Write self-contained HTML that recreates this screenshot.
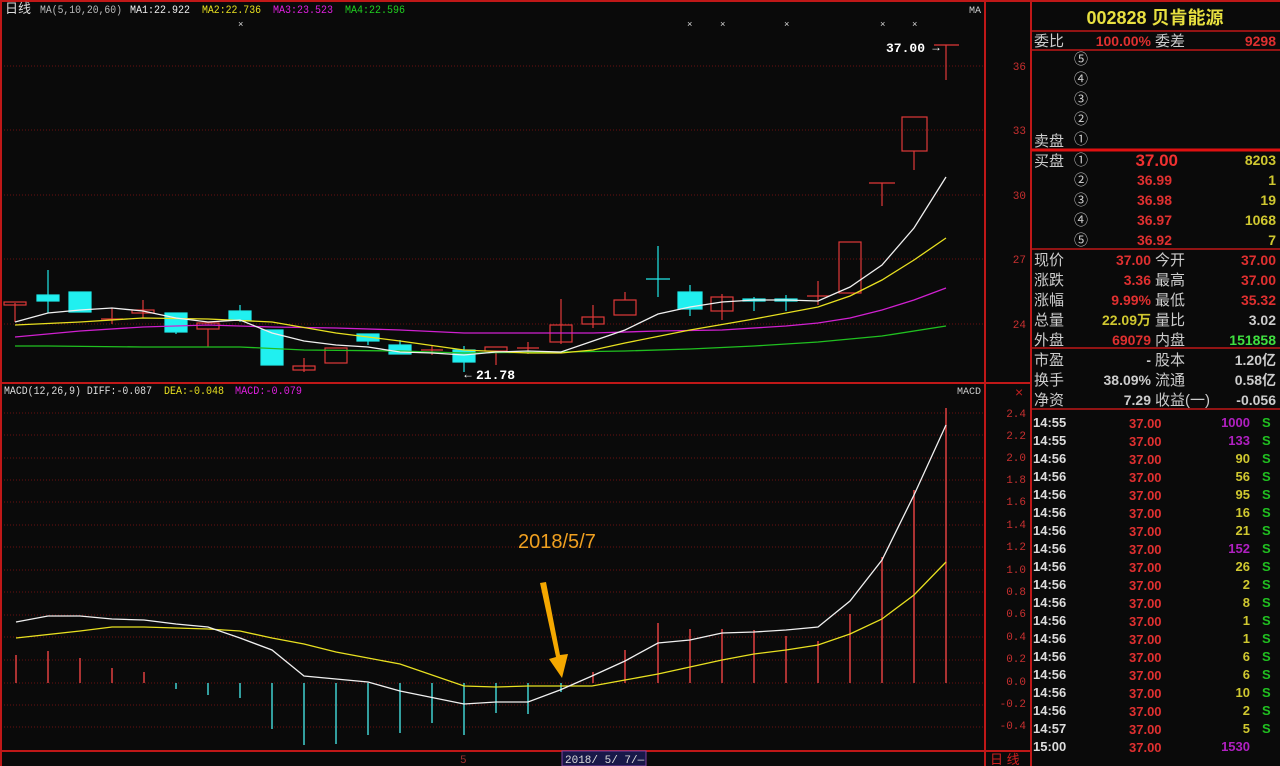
<!DOCTYPE html>
<html><head><meta charset="utf-8"><style>
html,body{margin:0;padding:0;background:#0a0a0a;width:1280px;height:766px;overflow:hidden}
svg{display:block}
.m{font-family:"Liberation Mono",monospace}
.s{font-family:"Liberation Sans","Noto Sans CJK SC",sans-serif}
</style></head><body>
<svg width="1280" height="766" viewBox="0 0 1280 766" xmlns="http://www.w3.org/2000/svg">
<rect width="1280" height="766" fill="#0a0a0a"/>
<g stroke="#c01818" stroke-width="2" fill="none">
<line x1="0" y1="1" x2="1280" y2="1"/>
<line x1="1" y1="0" x2="1" y2="766"/>
<line x1="985" y1="0" x2="985" y2="766"/>
<line x1="1031" y1="0" x2="1031" y2="766"/>
<line x1="0" y1="383" x2="1031" y2="383"/>
<line x1="0" y1="751" x2="1031" y2="751"/>
</g>
<g stroke="#6a1010" stroke-width="1" stroke-dasharray="1,2">
<line x1="4" y1="66" x2="984" y2="66"/><line x1="4" y1="130" x2="984" y2="130"/><line x1="4" y1="195" x2="984" y2="195"/><line x1="4" y1="259" x2="984" y2="259"/><line x1="4" y1="324" x2="984" y2="324"/>
<line x1="4" y1="413" x2="984" y2="413"/><line x1="4" y1="435" x2="984" y2="435"/><line x1="4" y1="458" x2="984" y2="458"/><line x1="4" y1="480" x2="984" y2="480"/><line x1="4" y1="502" x2="984" y2="502"/><line x1="4" y1="525" x2="984" y2="525"/><line x1="4" y1="547" x2="984" y2="547"/><line x1="4" y1="570" x2="984" y2="570"/><line x1="4" y1="592" x2="984" y2="592"/><line x1="4" y1="615" x2="984" y2="615"/><line x1="4" y1="637" x2="984" y2="637"/><line x1="4" y1="660" x2="984" y2="660"/><line x1="4" y1="683" x2="984" y2="683"/><line x1="4" y1="705" x2="984" y2="705"/><line x1="4" y1="727" x2="984" y2="727"/>
</g>
<g class="m" font-size="11">
<text x="5" y="13" fill="#ddd" class="s" font-size="13">日线</text>
<text x="40" y="13" fill="#bbb" textLength="82" lengthAdjust="spacingAndGlyphs">MA(5,10,20,60)</text>
<text x="130" y="13" fill="#eee" textLength="60" lengthAdjust="spacingAndGlyphs">MA1:22.922</text>
<text x="202" y="13" fill="#e8e020" textLength="59" lengthAdjust="spacingAndGlyphs">MA2:22.736</text>
<text x="273" y="13" fill="#e020e0" textLength="60" lengthAdjust="spacingAndGlyphs">MA3:23.523</text>
<text x="345" y="13" fill="#20d020" textLength="60" lengthAdjust="spacingAndGlyphs">MA4:22.596</text>
<text x="969" y="13" fill="#ccc" font-size="10">MA</text>
<text x="4" y="394" fill="#ddd" textLength="148" lengthAdjust="spacingAndGlyphs">MACD(12,26,9) DIFF:-0.087</text>
<text x="164" y="394" fill="#e8e020" textLength="60" lengthAdjust="spacingAndGlyphs">DEA:-0.048</text>
<text x="235" y="394" fill="#e020e0" textLength="67" lengthAdjust="spacingAndGlyphs">MACD:-0.079</text>
<text x="957" y="394" fill="#ccc" font-size="10">MACD</text>
</g>
<g fill="#ddd" font-size="9" class="m"><text x="238" y="27">×</text><text x="687" y="27">×</text><text x="720" y="27">×</text><text x="784" y="27">×</text><text x="880" y="27">×</text><text x="912" y="27">×</text></g>
<g fill="#c83030" font-size="11" class="m" text-anchor="end">
<text x="1026" y="70">36</text><text x="1026" y="134">33</text><text x="1026" y="199">30</text><text x="1026" y="263">27</text><text x="1026" y="328">24</text>
<text x="1026" y="417">2.4</text><text x="1026" y="439">2.2</text><text x="1026" y="461">2.0</text><text x="1026" y="483">1.8</text><text x="1026" y="505">1.6</text><text x="1026" y="528">1.4</text><text x="1026" y="550">1.2</text><text x="1026" y="573">1.0</text><text x="1026" y="595">0.8</text><text x="1026" y="617">0.6</text><text x="1026" y="640">0.4</text><text x="1026" y="662">0.2</text><text x="1026" y="685">0.0</text><text x="1026" y="707">-0.2</text><text x="1026" y="729">-0.4</text>
</g>
<text x="1015" y="397" fill="#c02020" font-size="14" class="s">×</text>
<g stroke-width="1.2" fill="none">
<g stroke="#e03838">
<line x1="15" y1="303" x2="15" y2="322"/><rect x="4" y="302" width="22" height="3"/>
<line x1="112" y1="308" x2="112" y2="324"/><line x1="101" y1="319" x2="123" y2="319"/>
<line x1="143" y1="300" x2="143" y2="318"/><rect x="132" y="310" width="22" height="3"/>
<line x1="208" y1="329" x2="208" y2="347"/><rect x="197" y="323" width="22" height="6"/>
<line x1="304" y1="358" x2="304" y2="372"/><rect x="293" y="366" width="22" height="4"/>
<rect x="325" y="348" width="22" height="15"/>
<line x1="432" y1="345" x2="432" y2="355"/><line x1="421" y1="350" x2="443" y2="350"/>
<line x1="496" y1="351" x2="496" y2="365"/><rect x="485" y="347" width="22" height="4"/>
<line x1="528" y1="342" x2="528" y2="354"/><line x1="517" y1="348" x2="539" y2="348"/>
<line x1="561" y1="299" x2="561" y2="344"/><rect x="550" y="325" width="22" height="17"/>
<line x1="593" y1="305" x2="593" y2="328"/><rect x="582" y="317" width="22" height="7"/>
<line x1="625" y1="292" x2="625" y2="300"/><rect x="614" y="300" width="22" height="15"/>
<line x1="722" y1="294" x2="722" y2="320"/><rect x="711" y="297" width="22" height="14"/>
<line x1="818" y1="281" x2="818" y2="305"/><line x1="807" y1="296" x2="829" y2="296"/>
<rect x="839" y="242" width="22" height="51"/>
<line x1="882" y1="183" x2="882" y2="206"/><line x1="869" y1="183" x2="895" y2="183"/>
<line x1="914" y1="151" x2="914" y2="170"/><rect x="902" y="117" width="25" height="34"/>
<line x1="946" y1="45" x2="946" y2="80"/><line x1="934" y1="45" x2="959" y2="45"/>
</g>
<g stroke="#20e8e8" fill="#20f0f0">
<line x1="48" y1="270" x2="48" y2="313"/><rect x="37" y="295" width="22" height="6"/>
<rect x="69" y="292" width="22" height="20"/>
<line x1="176" y1="313" x2="176" y2="334"/><rect x="165" y="313" width="22" height="19"/>
<line x1="240" y1="305" x2="240" y2="322"/><rect x="229" y="311" width="22" height="9"/>
<rect x="261" y="330" width="22" height="35"/>
<line x1="368" y1="334" x2="368" y2="345"/><rect x="357" y="334" width="22" height="7"/>
<line x1="400" y1="340" x2="400" y2="354"/><rect x="389" y="345" width="22" height="9"/>
<line x1="464" y1="346" x2="464" y2="372"/><rect x="453" y="350" width="22" height="12"/>
<line x1="658" y1="246" x2="658" y2="297"/><line x1="646" y1="279" x2="670" y2="279"/>
<line x1="690" y1="285" x2="690" y2="316"/><rect x="678" y="292" width="24" height="17"/>
<line x1="754" y1="297" x2="754" y2="311"/><rect x="743" y="299" width="22" height="2"/>
<line x1="786" y1="295" x2="786" y2="311"/><rect x="775" y="299" width="22" height="2"/>
</g>
</g>
<g fill="none" stroke-width="1.3">
<polyline stroke="#20c020" points="15,346 48,346 143,347 240,347 304,350 400,351 464,353 561,352 625,351 690,349 754,346 818,342 882,336 946,326"/>
<polyline stroke="#d020d0" points="15,337 80,331 143,327 208,325 272,327 336,328 400,330 464,333 528,333 593,333 658,331 722,330 786,326 818,323 850,318 882,310 914,300 946,288"/>
<polyline stroke="#e8e020" points="15,325 80,322 143,318 208,319 272,322 336,333 400,341 464,350 528,353 561,353 593,350 625,343 690,330 754,319 818,307 850,296 882,280 914,260 946,238"/>
<polyline stroke="#f0f0f0" points="15,322 48,313 80,310 112,308 143,311 176,318 208,322 240,320 272,333 304,341 336,345 368,347 400,352 432,353 464,355 496,352 528,351 561,352 593,341 625,330 658,314 690,307 722,302 754,300 786,300 818,301 850,287 882,265 914,228 946,177"/>
</g>
<text x="886" y="52" fill="#fff" font-weight="bold" font-size="13" class="m">37.00</text>
<text x="930" y="51" fill="#fff" font-size="12" class="s">→</text>
<text x="462" y="378" fill="#fff" font-size="12" class="s">←</text>
<text x="476" y="379" fill="#fff" font-weight="bold" font-size="13" class="m">21.78</text>
<g stroke-width="1.5">
<g stroke="#e04040">
<line x1="16" y1="655" x2="16" y2="683"/><line x1="48" y1="651" x2="48" y2="683"/><line x1="80" y1="658" x2="80" y2="683"/><line x1="112" y1="668" x2="112" y2="683"/><line x1="144" y1="672" x2="144" y2="683"/>
<line x1="593" y1="672" x2="593" y2="683"/><line x1="625" y1="650" x2="625" y2="683"/><line x1="658" y1="623" x2="658" y2="683"/><line x1="690" y1="629" x2="690" y2="683"/><line x1="722" y1="629" x2="722" y2="683"/><line x1="754" y1="630" x2="754" y2="683"/><line x1="786" y1="636" x2="786" y2="683"/><line x1="818" y1="641" x2="818" y2="683"/><line x1="850" y1="614" x2="850" y2="683"/><line x1="882" y1="557" x2="882" y2="683"/><line x1="914" y1="490" x2="914" y2="683"/><line x1="946" y1="408" x2="946" y2="683"/>
</g>
<g stroke="#40d0d0">
<line x1="176" y1="683" x2="176" y2="689"/><line x1="208" y1="683" x2="208" y2="695"/><line x1="240" y1="683" x2="240" y2="698"/><line x1="272" y1="683" x2="272" y2="729"/><line x1="304" y1="683" x2="304" y2="745"/><line x1="336" y1="683" x2="336" y2="744"/><line x1="368" y1="683" x2="368" y2="735"/><line x1="400" y1="683" x2="400" y2="733"/><line x1="432" y1="683" x2="432" y2="723"/><line x1="464" y1="683" x2="464" y2="735"/><line x1="496" y1="683" x2="496" y2="713"/><line x1="528" y1="683" x2="528" y2="714"/><line x1="561" y1="683" x2="561" y2="692"/>
</g>
</g>
<g fill="none" stroke-width="1.3">
<polyline stroke="#e8e020" points="16,638 80,631 112,627 144,627 208,629 240,631 272,638 304,644 336,652 368,658 400,664 464,686 496,687 528,686 560,686 592,686 625,680 658,674 690,667 722,660 754,654 786,650 818,645 850,634 882,619 914,595 946,562"/>
<polyline stroke="#f0f0f0" points="16,622 48,616 80,616 112,619 144,620 176,624 208,627 240,638 272,650 304,676 336,679 368,682 400,691 464,704 496,702 528,702 560,690 592,676 625,661 658,643 690,640 722,633 754,632 786,630 818,627 850,601 882,560 914,495 946,425"/>
</g>
<text x="518" y="548" fill="#f0a020" font-size="20" class="s">2018/5/7</text>
<polygon points="540,583 546,582 560,655 568,654 562,678 549,659 556,657" fill="#f5a800"/>
<text x="460" y="763" fill="#a03030" font-size="11" class="m">5</text>
<rect x="562" y="751" width="84" height="15" fill="#181848" stroke="#8040a0"/>
<text x="565" y="763" fill="#ddd" font-size="11" class="m">2018/ 5/ 7/—</text>
<text x="990" y="764" fill="#d02020" font-size="13" class="s">日 线</text>
<g stroke="#c01818" stroke-width="1.5">
<line x1="1031" y1="31" x2="1280" y2="31"/><line x1="1031" y1="50" x2="1280" y2="50"/>
<line x1="1031" y1="150" x2="1280" y2="150" stroke-width="3" stroke="#e01010"/>
<line x1="1031" y1="249" x2="1280" y2="249"/><line x1="1031" y1="348" x2="1280" y2="348"/><line x1="1031" y1="409" x2="1280" y2="409"/>
</g>
<text x="1155" y="24" fill="#e8e040" font-size="18" font-weight="bold" text-anchor="middle" class="s">002828 贝肯能源</text>
<g class="s" font-size="15">
<text x="1034" y="46" fill="#ccc">委比</text><text x="1155" y="46" fill="#ccc">委差</text>
<text x="1034" y="146" fill="#ccc">卖盘</text><text x="1034" y="166" fill="#ccc">买盘</text>
<g fill="#ccc"><text x="1034" y="265">现价</text><text x="1034" y="285">涨跌</text><text x="1034" y="305">涨幅</text><text x="1034" y="325">总量</text><text x="1034" y="345">外盘</text>
<text x="1155" y="265">今开</text><text x="1155" y="285">最高</text><text x="1155" y="305">最低</text><text x="1155" y="325">量比</text><text x="1155" y="345">内盘</text>
<text x="1034" y="365">市盈</text><text x="1034" y="385">换手</text><text x="1034" y="405">净资</text>
<text x="1155" y="365">股本</text><text x="1155" y="385">流通</text><text x="1155" y="405">收益(一)</text></g>
</g>
<g class="s" font-size="14" fill="#ccc">
<text x="1074" y="64">⑤</text><text x="1074" y="84">④</text><text x="1074" y="104">③</text><text x="1074" y="124">②</text><text x="1074" y="144">①</text>
<text x="1074" y="165">①</text><text x="1074" y="185">②</text><text x="1074" y="205">③</text><text x="1074" y="225">④</text><text x="1074" y="245">⑤</text>
</g>
<g class="s" font-weight="bold" font-size="14">
<text x="1151" y="46" fill="#e03030" text-anchor="end">100.00%</text><text x="1276" y="46" fill="#e03030" text-anchor="end">9298</text>
<text x="1178" y="166" fill="#f03030" font-size="17" text-anchor="end">37.00</text>
<text x="1172" y="185" fill="#e03030" text-anchor="end">36.99</text><text x="1172" y="205" fill="#e03030" text-anchor="end">36.98</text><text x="1172" y="225" fill="#e03030" text-anchor="end">36.97</text><text x="1172" y="245" fill="#e03030" text-anchor="end">36.92</text>
<g fill="#d0c830" text-anchor="end"><text x="1276" y="165">8203</text><text x="1276" y="185">1</text><text x="1276" y="205">19</text><text x="1276" y="225">1068</text><text x="1276" y="245">7</text></g>
<g text-anchor="end">
<text x="1151" y="265" fill="#e03030">37.00</text><text x="1151" y="285" fill="#e03030">3.36</text><text x="1151" y="305" fill="#e03030">9.99%</text><text x="1151" y="325" fill="#d0c830">22.09万</text><text x="1151" y="345" fill="#e03030">69079</text>
<text x="1276" y="265" fill="#e03030">37.00</text><text x="1276" y="285" fill="#e03030">37.00</text><text x="1276" y="305" fill="#e03030">35.32</text><text x="1276" y="325" fill="#ccc">3.02</text><text x="1276" y="345" fill="#40e040">151858</text>
<text x="1151" y="365" fill="#ccc">-</text><text x="1151" y="385" fill="#ccc">38.09%</text><text x="1151" y="405" fill="#ccc">7.29</text>
<text x="1276" y="365" fill="#ccc">1.20亿</text><text x="1276" y="385" fill="#ccc">0.58亿</text><text x="1276" y="405" fill="#ccc">-0.056</text>
</g>
</g>
<g class="s" font-weight="bold" font-size="13">
<g fill="#ddd">
<text x="1033" y="427">14:55</text><text x="1033" y="445">14:55</text><text x="1033" y="463">14:56</text><text x="1033" y="481">14:56</text><text x="1033" y="499">14:56</text><text x="1033" y="517">14:56</text><text x="1033" y="535">14:56</text><text x="1033" y="553">14:56</text><text x="1033" y="571">14:56</text><text x="1033" y="589">14:56</text><text x="1033" y="607">14:56</text><text x="1033" y="625">14:56</text><text x="1033" y="643">14:56</text><text x="1033" y="661">14:56</text><text x="1033" y="679">14:56</text><text x="1033" y="697">14:56</text><text x="1033" y="715">14:56</text><text x="1033" y="733">14:57</text><text x="1033" y="751">15:00</text>
</g>
<g fill="#e03030">
<text x="1129" y="428">37.00</text><text x="1129" y="446">37.00</text><text x="1129" y="464">37.00</text><text x="1129" y="482">37.00</text><text x="1129" y="500">37.00</text><text x="1129" y="518">37.00</text><text x="1129" y="536">37.00</text><text x="1129" y="554">37.00</text><text x="1129" y="572">37.00</text><text x="1129" y="590">37.00</text><text x="1129" y="608">37.00</text><text x="1129" y="626">37.00</text><text x="1129" y="644">37.00</text><text x="1129" y="662">37.00</text><text x="1129" y="680">37.00</text><text x="1129" y="698">37.00</text><text x="1129" y="716">37.00</text><text x="1129" y="734">37.00</text><text x="1129" y="752">37.00</text>
</g>
<g text-anchor="end" fill="#d0c830">
<text x="1250" y="427" fill="#b020c0">1000</text><text x="1250" y="445" fill="#b020c0">133</text><text x="1250" y="463">90</text><text x="1250" y="481">56</text><text x="1250" y="499">95</text><text x="1250" y="517">16</text><text x="1250" y="535">21</text><text x="1250" y="553" fill="#b020c0">152</text><text x="1250" y="571">26</text><text x="1250" y="589">2</text><text x="1250" y="607">8</text><text x="1250" y="625">1</text><text x="1250" y="643">1</text><text x="1250" y="661">6</text><text x="1250" y="679">6</text><text x="1250" y="697">10</text><text x="1250" y="715">2</text><text x="1250" y="733">5</text><text x="1250" y="751" fill="#b020c0">1530</text>
</g>
<g fill="#20c020">
<text x="1262" y="427">S</text><text x="1262" y="445">S</text><text x="1262" y="463">S</text><text x="1262" y="481">S</text><text x="1262" y="499">S</text><text x="1262" y="517">S</text><text x="1262" y="535">S</text><text x="1262" y="553">S</text><text x="1262" y="571">S</text><text x="1262" y="589">S</text><text x="1262" y="607">S</text><text x="1262" y="625">S</text><text x="1262" y="643">S</text><text x="1262" y="661">S</text><text x="1262" y="679">S</text><text x="1262" y="697">S</text><text x="1262" y="715">S</text><text x="1262" y="733">S</text>
</g>
</g>
</svg>
</body></html>
